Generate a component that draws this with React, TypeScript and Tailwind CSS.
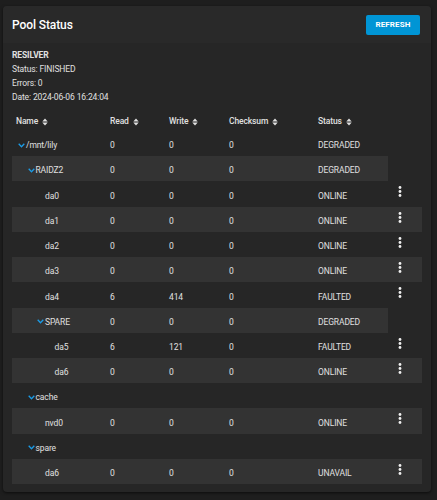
import React from "react";

type Row = {
  name: string;
  level: number;
  group: boolean;
  r?: string;
  w?: string;
  c?: string;
  s?: string;
};

const rows: Row[] = [
  { name: "/mnt/lily", level: 0, group: true, r: "0", w: "0", c: "0", s: "DEGRADED" },
  { name: "RAIDZ2", level: 1, group: true, r: "0", w: "0", c: "0", s: "DEGRADED" },
  { name: "da0", level: 2, group: false, r: "0", w: "0", c: "0", s: "ONLINE" },
  { name: "da1", level: 2, group: false, r: "0", w: "0", c: "0", s: "ONLINE" },
  { name: "da2", level: 2, group: false, r: "0", w: "0", c: "0", s: "ONLINE" },
  { name: "da3", level: 2, group: false, r: "0", w: "0", c: "0", s: "ONLINE" },
  { name: "da4", level: 2, group: false, r: "6", w: "414", c: "0", s: "FAULTED" },
  { name: "SPARE", level: 2, group: true, r: "0", w: "0", c: "0", s: "DEGRADED" },
  { name: "da5", level: 3, group: false, r: "6", w: "121", c: "0", s: "FAULTED" },
  { name: "da6", level: 3, group: false, r: "0", w: "0", c: "0", s: "ONLINE" },
  { name: "cache", level: 1, group: true },
  { name: "nvd0", level: 2, group: false, r: "0", w: "0", c: "0", s: "ONLINE" },
  { name: "spare", level: 1, group: true },
  { name: "da6", level: 2, group: false, r: "0", w: "0", c: "0", s: "UNAVAIL" },
];

const groupPad: Record<number, string> = {
  0: "pl-[6px]",
  1: "pl-[15.5px]",
  2: "pl-[25px]",
  3: "pl-[34.5px]",
};
const leafPad: Record<number, string> = {
  1: "pl-[23.5px]",
  2: "pl-[33px]",
  3: "pl-[42.5px]",
};

function SortIcon() {
  return (
    <svg width="6" height="8" viewBox="0 0 6 8" className="ml-[4px]">
      <path d="M0.3 3.4 L3 0.4 L5.7 3.4 Z" fill="#e0e0e0" />
      <path d="M0.3 4.6 L3 7.6 L5.7 4.6 Z" fill="#e0e0e0" />
    </svg>
  );
}

function Chevron() {
  return (
    <svg width="7" height="5" viewBox="0 0 7 5" className="mr-[1px] -mt-[1px]">
      <path d="M0.7 0.8 L3.5 3.8 L6.3 0.8" fill="none" stroke="#1a9be6" strokeWidth="1.3" />
    </svg>
  );
}

function Dots() {
  return (
    <svg width="4" height="11" viewBox="0 0 4 11">
      <circle cx="2" cy="1.5" r="1.4" fill="#f0f0f0" />
      <circle cx="2" cy="5.5" r="1.4" fill="#f0f0f0" />
      <circle cx="2" cy="9.5" r="1.4" fill="#f0f0f0" />
    </svg>
  );
}

export default function App() {
  return (
    <div
      className="min-h-[500px] w-[437px] bg-[#1e1e1e] pt-[6px] pl-[3px] pr-[6px] pb-[8px] text-[#e0e0e0]"
      style={{ fontFamily: "Roboto, 'Liberation Sans', sans-serif" }}
    >
      <div className="w-[428px] rounded-[4px] bg-[#262626] shadow-[0_1px_3px_rgba(0,0,0,0.6)] overflow-hidden">
        <div className="flex h-[37px] items-center justify-between bg-[#292929] pl-[9px] pr-[11px]">
          <div className="text-[12px] font-medium text-white leading-none pt-[1px] tracking-[-0.1px]">Pool Status</div>
          <button className="flex h-[20px] w-[54px] items-center justify-center rounded-[2px] bg-[#0095d5] text-[8px] font-bold tracking-[0.1px] text-white">
            REFRESH
          </button>
        </div>
        <div className="pt-[5px] pb-[8px] text-[8.5px] tracking-[-0.12px]">
          <div className="pl-[9px] leading-[14px]">
            <div className="font-bold">RESILVER</div>
            <div>Status: FINISHED</div>
            <div>Errors: 0</div>
            <div>Date: 2024-06-06 16:24:04</div>
          </div>
          <div className="mt-[8px] ml-[9px] flex h-[19px] w-[410px] items-center font-medium">
            <div className="flex w-[98px] items-center pl-[4px]">Name<SortIcon /></div>
            <div className="flex w-[59px] items-center">Read<SortIcon /></div>
            <div className="flex w-[60px] items-center">Write<SortIcon /></div>
            <div className="flex w-[89px] items-center">Checksum<SortIcon /></div>
            <div className="flex w-[70px] items-center">Status<SortIcon /></div>
          </div>
          <div className="ml-[9px] w-[410px]">
            {rows.map((row, i) => {
              const striped = i % 2 === 1;
              return (
                <div
                  key={i}
                  className={
                    "flex h-[25.23px] " +
                    (striped && !row.group ? "bg-[#333333]" : "")
                  }
                >
                  <div
                    className={
                      "flex w-[376px] items-center pt-[4px] " +
                      (striped && row.group ? "bg-[#333333]" : "")
                    }
                  >
                    <div
                      className={
                        "flex w-[98px] items-center " +
                        (row.group ? groupPad[row.level] : leafPad[row.level])
                      }
                    >
                      {row.group && <Chevron />}
                      <span>{row.name}</span>
                    </div>
                    <div className="w-[59px]">{row.r}</div>
                    <div className="w-[60px]">{row.w}</div>
                    <div className="w-[89px]">{row.c}</div>
                    <div className="w-[70px]">{row.s}</div>
                  </div>
                  <div className="flex w-[34px] items-start pl-[10px] pt-[5px]">
                    {!row.group && <Dots />}
                  </div>
                </div>
              );
            })}
          </div>
        </div>
      </div>
    </div>
  );
}
